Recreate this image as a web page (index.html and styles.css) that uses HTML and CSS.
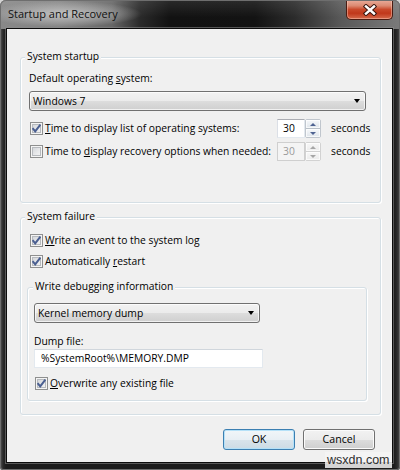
FILE: index.html
```html
<!DOCTYPE html>
<html>
<head>
<meta charset="utf-8">
<title>Startup and Recovery</title>
<link rel="stylesheet" href="styles.css">
</head>
<body>
<div class="window">
  <div class="titlebar">
    <span class="title">Startup and Recovery</span>
    <div class="close">
      <svg width="14" height="12" viewBox="0 0 14 12">
        <path d="M3 2.5 L11 9.5 M11 2.5 L3 9.5" stroke="#3b1710" stroke-width="4.4" stroke-linecap="square" fill="none"/>
        <path d="M3 2.5 L11 9.5 M11 2.5 L3 9.5" stroke="#ffffff" stroke-width="2.4" stroke-linecap="square" fill="none"/>
      </svg>
    </div>
  </div>
  <div class="client">
    <div class="group g-startup">
      <div class="legend">System startup</div>
      <div class="label lab-os">Default operating <u>s</u>ystem:</div>
      <div class="select sel-os"><span>Windows 7</span><i class="caret"></i></div>
      <div class="row row-first">
        <span class="check on"><svg width="11" height="11" viewBox="0 0 11 11"><path d="M1.6 5.2 L4.2 8.4 L9.4 1.6" stroke="#4a5f91" stroke-width="2" fill="none"/></svg></span>
        <span class="text"><u>T</u>ime to display list of operating systems:</span>
        <span class="spin">
          <span class="spin-field">30</span>
          <span class="spin-btns"><span class="sb"><i class="up"></i></span><span class="sb"><i class="down"></i></span></span>
        </span>
        <span class="unit">seconds</span>
      </div>
      <div class="row row-second">
        <span class="check"></span>
        <span class="text">Time to <u>d</u>isplay recovery options when needed:</span>
        <span class="spin disabled">
          <span class="spin-field">30</span>
          <span class="spin-btns"><span class="sb"><i class="up"></i></span><span class="sb"><i class="down"></i></span></span>
        </span>
        <span class="unit">seconds</span>
      </div>
    </div>

    <div class="group g-failure">
      <div class="legend">System failure</div>
      <div class="row row-log">
        <span class="check on"><svg width="11" height="11" viewBox="0 0 11 11"><path d="M1.6 5.2 L4.2 8.4 L9.4 1.6" stroke="#4a5f91" stroke-width="2" fill="none"/></svg></span>
        <span class="text"><u>W</u>rite an event to the system log</span>
      </div>
      <div class="row row-restart">
        <span class="check on"><svg width="11" height="11" viewBox="0 0 11 11"><path d="M1.6 5.2 L4.2 8.4 L9.4 1.6" stroke="#4a5f91" stroke-width="2" fill="none"/></svg></span>
        <span class="text">Automatically <u>r</u>estart</span>
      </div>
      <div class="group g-debug">
        <div class="legend">Write debugging information</div>
        <div class="select sel-dump"><span>Kernel memory dump</span><i class="caret"></i></div>
        <div class="label lab-dump">Dump file:</div>
        <div class="input">%SystemRoot%\MEMORY.DMP</div>
        <div class="row row-overwrite">
          <span class="check on"><svg width="11" height="11" viewBox="0 0 11 11"><path d="M1.6 5.2 L4.2 8.4 L9.4 1.6" stroke="#4a5f91" stroke-width="2" fill="none"/></svg></span>
          <span class="text"><u>O</u>verwrite any existing file</span>
        </div>
      </div>
    </div>

    <div class="buttons">
      <div class="btn default">OK</div>
      <div class="btn">Cancel</div>
    </div>
  </div>
  <div class="watermark">wsxdn.com</div>
</div>
</body>
</html>
```

FILE: styles.css
```css
* { box-sizing: border-box; }
html, body { margin: 0; padding: 0; }
body {
  width: 400px;
  height: 470px;
  overflow: hidden;
  background: #d4d4d4;
  font-family: "Open Sans", "Noto Sans", sans-serif;
  font-size: 10.3px;
  line-height: 15px;
  color: #000;
}
u { text-decoration: underline; text-underline-offset: 1px; }

.window {
  position: relative;
  width: 400px;
  height: 470px;
  display: flex;
  flex-direction: column;
  border-radius: 6px 6px 3px 3px;
  overflow: hidden;
  background: linear-gradient(to right, #5a5a5a 0, #2a2a2a 3px, #1c1c1c 6px, #1c1c1c 394px, #2a2a2a 397px, #4a4a4a 400px);
}
.window::after {
  content: "";
  position: absolute;
  inset: 0;
  border: 1px solid #6e6e6e;
  border-radius: 6px 6px 3px 3px;
  pointer-events: none;
}

.titlebar {
  flex: none;
  height: 29px;
  display: flex;
  justify-content: space-between;
  align-items: flex-start;
  padding: 0 7px 0 8px;
  background:
    radial-gradient(ellipse 78px 13px at 64px 14px, rgba(205,205,205,0.85) 0%, rgba(190,190,190,0.45) 60%, rgba(190,190,190,0) 100%),
    linear-gradient(to bottom, rgba(255,255,255,0.10), rgba(255,255,255,0) 60%),
    linear-gradient(to right, #888 0, #838383 60px, #676767 112px, #2a2a2a 140px, #121212 170px, #131313 255px, #2c2c2c 295px, #585858 340px, #7a7a7a 400px);
}
.title {
  margin-top: 6px;
  font-size: 11px;
  color: #111;
  white-space: nowrap;
}
.close {
  width: 47px;
  height: 20px;
  display: flex;
  align-items: center;
  justify-content: center;
  border: 1px solid #4a1c12;
  border-top: none;
  border-radius: 0 0 5px 5px;
  background: linear-gradient(to bottom, #e9ad9c 0%, #dc8a72 30%, #c9492b 50%, #c0381b 70%, #d56a4c 100%);
  box-shadow: inset 0 0 0 1px rgba(255, 210, 195, 0.45);
}

.client {
  flex: none;
  margin: 0 8px 0 7px;
  height: 433px;
  background: #f0f0f0;
  padding: 28px 0 0 13px;
  box-shadow: 0 0 0 1px #0c0c0c, 0 0 0 2px rgba(140,140,140,0.55);
}

.group {
  border: 1px solid #d5dfe5;
  border-radius: 3px;
  box-shadow: inset 1px 1px 0 #fff, 1px 1px 0 #fff;
}
.legend {
  width: max-content;
  height: 15px;
  margin-top: -9px;
  padding: 0 2px;
  background: #f0f0f0;
  white-space: nowrap;
}

.g-startup {
  width: 361px;
  padding: 0 0 41px 6px;
}
.g-startup .legend { margin-left: -2px; }
.lab-os { margin: 7px 0 0 2px; height: 15px; }
.sel-os { margin: 5px 0 0 2px; width: 337px; }

.g-failure {
  width: 361px;
  margin-top: 14px;
  padding: 0 0 13px 6px;
}
.g-failure > .legend { margin-left: -2px; }

.g-debug {
  width: 340px;
  margin-top: 16px;
  padding: 0 0 7px 6px;
}
.g-debug .legend { margin-left: -1px; }
.sel-dump { margin-top: 9px; width: 226px; }
.lab-dump { margin-top: 11px; height: 15px; }

.select {
  height: 20px;
  display: flex;
  align-items: center;
  justify-content: space-between;
  padding: 0 5px 0 3px;
  border: 1px solid #707070;
  border-radius: 3px;
  background: linear-gradient(to bottom, #f2f2f2 0%, #ebebeb 50%, #dddddd 51%, #cfcfcf 100%);
  box-shadow: inset 0 0 0 1px rgba(255,255,255,0.7);
}
.caret {
  width: 0;
  height: 0;
  border-left: 3.5px solid transparent;
  border-right: 3.5px solid transparent;
  border-top: 4px solid #000;
}

.input {
  width: 229px;
  height: 19px;
  padding: 1px 0 0 6px;
  background: #fff;
  border: 1px solid #e3e9ef;
  border-top-color: #d0d6dc;
}

.row {
  height: 19px;
  display: flex;
  align-items: center;
  white-space: nowrap;
}
.row-first { margin: 8px 1px 0 3px; }
.row-second { margin: 4px 1px 0 3px; }
.row-log { margin: 7px 0 0 3px; }
.row-restart { margin: 2px 0 0 3px; }
.row-overwrite { margin: 6px 0 0 1px; }
.row .text { flex: 1; min-width: 0; }

.check {
  flex: none;
  width: 13px;
  height: 13px;
  margin-right: 2px;
  border: 1px solid #8e8f8f;
  background: linear-gradient(135deg, #cdd0d4 0%, #e9eaec 60%, #f6f6f6 100%);
  box-shadow: inset 0 0 0 1px #f4f4f4, inset 0 0 0 2px #b7babe;
  display: flex;
  align-items: center;
  justify-content: center;
}
.check svg { display: block; }

.spin {
  flex: none;
  width: 44px;
  height: 19px;
  display: flex;
}
.spin-field {
  width: 28px;
  height: 19px;
  padding: 1px 0 0 5px;
  background: #fff;
  border: 1px solid #e3e9ef;
  border-top-color: #abadb3;
  border-left-color: #dbdfe6;
}
.spin-btns {
  width: 16px;
  height: 19px;
  display: flex;
  flex-direction: column;
  border: 1px solid #c0c6cd;
  border-radius: 2px;
  background: #e9edf1;
}
.sb {
  flex: 1;
  display: flex;
  align-items: center;
  justify-content: center;
  background: linear-gradient(to bottom, #f6f8fa, #dfe5eb);
  box-shadow: inset 0 0 0 1px rgba(255,255,255,0.7);
}
.sb + .sb { border-top: 1px solid #b8c0c8; }
.up, .down {
  width: 0;
  height: 0;
  border-left: 3px solid transparent;
  border-right: 3px solid transparent;
}
.up { border-bottom: 3px solid #4e6391; }
.down { border-top: 3px solid #4e6391; }

.spin.disabled .spin-field {
  background: #f4f4f4;
  color: #9a9a9a;
  border-color: #cfcfcf;
}
.spin.disabled .spin-btns { border-color: #d2d2d2; background: #f0f0f0; }
.spin.disabled .sb { background: linear-gradient(to bottom, #f7f7f7, #ececec); }
.spin.disabled .sb + .sb { border-top-color: #d2d2d2; }
.spin.disabled .up { border-bottom-color: #a6a6a6; }
.spin.disabled .down { border-top-color: #a6a6a6; }

.unit {
  flex: none;
  width: 48px;
  margin-left: 10px;
}

.buttons {
  display: flex;
  justify-content: flex-end;
  gap: 8px;
  margin-top: 14px;
  padding-right: 17px;
}
.btn {
  width: 72px;
  height: 21px;
  display: flex;
  align-items: center;
  justify-content: center;
  font-size: 10.6px;
  border: 1px solid #707070;
  border-radius: 3px;
  background: linear-gradient(to bottom, #f2f2f2 0%, #ebebeb 50%, #dddddd 51%, #cfcfcf 100%);
  box-shadow: inset 0 0 0 1px #fbfbfb;
}
.btn.default {
  border-color: #3c7fb1;
  background: linear-gradient(to bottom, #f1f6f9 0%, #e8eff4 50%, #d9e4eb 51%, #ccdbe5 100%);
  box-shadow: inset 0 0 0 1px #b5e1f8;
}

.watermark {
  position: absolute;
  left: 325px;
  top: 452px;
  padding: 0 2px;
  font-family: "Liberation Sans", Arial, sans-serif;
  font-size: 12.5px;
  line-height: 16px;
  color: #2e2e2e;
  background: rgba(244,244,244,0.85);
}
```
